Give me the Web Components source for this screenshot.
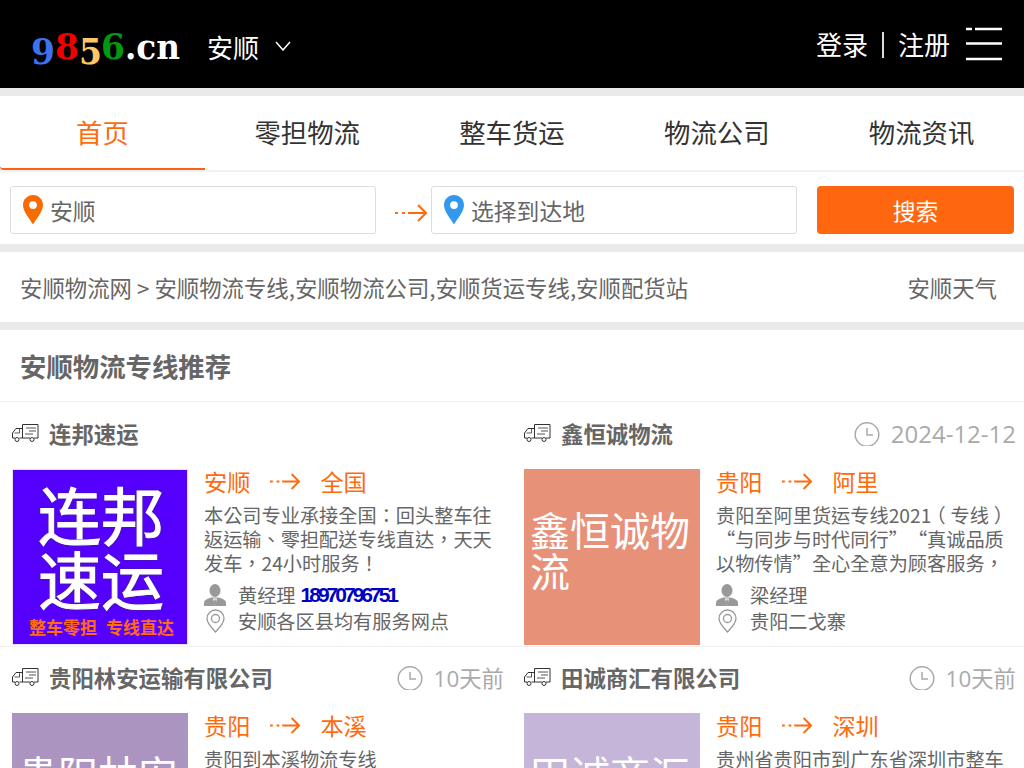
<!DOCTYPE html>
<html lang="zh-CN">
<head>
<meta charset="utf-8">
<title>安顺物流网</title>
<style>
    html { overflow: hidden; }
    body {
        margin: 0;
        background: #fff;
        color: #666;
        font-family: "Noto Sans CJK SC", "Noto Sans", sans-serif;
    }
</style>
</head>
<body>
<site-header></site-header>
<nav-tabs></nav-tabs>
<search-bar></search-bar>
<crumb-bar></crumb-bar>
<section-title>安顺物流专线推荐</section-title>
<line-grid>
    <line-card name="连邦速运" from="安顺" to="全国" contact="黄经理" phone="18970796751" address="安顺各区县均有服务网点"
        desc="本公司专业承接全国：回头整车往返运输、零担配送专线直达，天天发车，24小时服务！" special></line-card>
    <line-card name="鑫恒诚物流" date="2024-12-12" from="贵阳" to="阿里" contact="梁经理" address="贵阳二戈寨"
        cover="鑫恒诚物流" color="#e79179"
        desc="贵阳至阿里货运专线2021（专线）“与同步与时代同行”“真诚品质以物传情”全心全意为顾客服务，"></line-card>
    <line-card name="贵阳林安运输有限公司" date="10天前" from="贵阳" to="本溪" contact="陈经理" address="贵阳林安物流园"
        cover="贵阳林安运输" color="#ac94c0" desc="贵阳到本溪物流专线"></line-card>
    <line-card name="田诚商汇有限公司" date="10天前" from="贵阳" to="深圳" contact="田经理" address="贵阳市"
        cover="田诚商汇有限" color="#c5b5d9" desc="贵州省贵阳市到广东省深圳市整车运输"></line-card>
</line-grid>

<script>
const arrowIcon = (w, h) => `
    <svg width="${w}" height="${h}" viewBox="0 0 32 20" fill="none" stroke="#ff6a0d" stroke-width="2">
        <path d="M0 10h3M7 10h3M13 10h18M23 2l8 8-8 8"/>
    </svg>`;

const pinIcon = (color) => `
    <svg width="20" height="30" viewBox="0 0 20 30">
        <path fill="${color}" fill-rule="evenodd" d="M10 0C4.400 0 0 4.400 0 10c0 6.500 6.500 13.500 10 19.500C13.500 23.500 20 16.500 20 10 20 4.400 15.600 0 10 0zM10 6.200a3.900 3.900 0 1 1 0 7.800 3.900 3.900 0 0 1 0-7.800z"/>
    </svg>`;

class SiteHeader extends HTMLElement {
    constructor() {
        super();
        this.attachShadow({ mode: 'open' });
    }

    connectedCallback() {
        this.shadowRoot.innerHTML = `
            <style>
                :host {
                    display: flex;
                    align-items: center;
                    height: 88px;
                    background: #000;
                    color: #fff;
                    font-size: 26px;
                    border-bottom: 8px solid #eaeaea;
                }
                .logo { margin-left: 30px; display: block; }
                .city { margin-left: 7px; display: flex; align-items: center; gap: 16px; padding-top: 4px; }
                .user { margin-left: auto; display: flex; align-items: center; }
                .user span { margin-top: -2px; }
                .sep { width: 2px; height: 26px; background: #ddd; margin: 2px 14px 0 14px; }
                .menu { margin: 0 22px 0 16px; display: block; }
            </style>
            <svg class="logo" width="170" height="60" viewBox="0 0 170 60" font-family="'DejaVu Serif', serif" font-weight="bold" font-size="36">
                <text x="1" y="50" fill="#3f72ee" textLength="24" lengthAdjust="spacingAndGlyphs">9</text>
                <text x="25" y="45" fill="#f00000" textLength="24" lengthAdjust="spacingAndGlyphs">8</text>
                <text x="49" y="50" fill="#ffc766" textLength="23" lengthAdjust="spacingAndGlyphs">5</text>
                <text x="71" y="45" fill="#009a10" textLength="24" lengthAdjust="spacingAndGlyphs">6</text>
                <text x="95" y="45" fill="#fff" textLength="55" lengthAdjust="spacingAndGlyphs">.cn</text>
            </svg>
            <div class="city">
                <span>安顺</span>
                <svg width="16" height="10" viewBox="0 0 16 10" fill="none" stroke="#fff" stroke-width="1.500"><path d="M1 1l7 8 7-8"/></svg>
            </div>
            <div class="user">
                <span>登录</span><i class="sep"></i><span>注册</span>
                <svg class="menu" width="36" height="34" viewBox="0 0 36 34" fill="none" stroke="#fff" stroke-width="2.500">
                    <path d="M0 2h6M9 2h27M0 16.500h36M0 32h36"/>
                </svg>
            </div>
        `;
    }
}

class NavTabs extends HTMLElement {
    constructor() {
        super();
        this.attachShadow({ mode: 'open' });
    }

    connectedCallback() {
        const tabs = ['首页', '零担物流', '整车货运', '物流公司', '物流资讯'];
        this.shadowRoot.innerHTML = `
            <style>
                :host {
                    display: grid;
                    grid-template-columns: repeat(5, 1fr);
                    height: 76px;
                    box-sizing: border-box;
                    border-bottom: 2px solid #f0f0f5;
                    font-size: 26.400px;
                    color: #333;
                }
                a {
                    display: flex;
                    align-items: center;
                    justify-content: center;
                    height: 74px;
                    box-sizing: border-box;
                    padding-bottom: 4px;
                }
                a.on { color: #ff6a0d; border-bottom: 2px solid #ff6010; border-radius: 0 0 0 4px; padding-bottom: 2px; }
            </style>
            ${tabs.map((t, i) => `<a class="${i === 0 ? 'on' : ''}">${t}</a>`).join('')}
        `;
    }
}

class SearchBar extends HTMLElement {
    constructor() {
        super();
        this.attachShadow({ mode: 'open' });
    }

    connectedCallback() {
        this.shadowRoot.innerHTML = `
            <style>
                :host {
                    display: flex;
                    align-items: center;
                    height: 68px;
                    padding: 4px 10px 0;
                    border-bottom: 8px solid #eaeaea;
                    font-size: 22.800px;
                }
                .field {
                    width: 366px;
                    height: 48px;
                    box-sizing: border-box;
                    border: 1px solid #ddd;
                    border-radius: 3px;
                    display: flex;
                    align-items: center;
                    gap: 7px;
                    padding-left: 12px;
                    color: #666;
                }
                .go { width: 55px; padding: 6px 0 0 19px; box-sizing: border-box; display: flex; }
                button {
                    width: 197px;
                    height: 48px;
                    margin-left: 20px;
                    border: 0;
                    border-radius: 4px;
                    background: #ff6610;
                    color: #fff;
                    font: inherit;
                }
            </style>
            <div class="field">${pinIcon('#f76b00')}<span>安顺</span></div>
            <div class="go">${arrowIcon(32, 20)}</div>
            <div class="field">${pinIcon('#3399ee')}<span>选择到达地</span></div>
            <button>搜索</button>
        `;
    }
}

class CrumbBar extends HTMLElement {
    constructor() {
        super();
        this.attachShadow({ mode: 'open' });
    }

    connectedCallback() {
        this.shadowRoot.innerHTML = `
            <style>
                :host {
                    display: flex;
                    align-items: center;
                    justify-content: space-between;
                    height: 70px;
                    padding: 0 27px 0 20px;
                    border-bottom: 8px solid #eaeaea;
                    font-size: 22.400px;
                    color: #666;
                }
            </style>
            <span>安顺物流网 &gt; 安顺物流专线,安顺物流公司,安顺货运专线,安顺配货站</span>
            <span>安顺天气</span>
        `;
    }
}

class SectionTitle extends HTMLElement {
    constructor() {
        super();
        this.attachShadow({ mode: 'open' });
    }

    connectedCallback() {
        this.shadowRoot.innerHTML = `
            <style>
                :host {
                    display: flex;
                    align-items: center;
                    height: 71px;
                    padding-left: 20px;
                    border-bottom: 1px solid #eee;
                    font-size: 26.400px;
                    font-weight: bold;
                    color: #666;
                }
            </style>
            <slot></slot>
        `;
    }
}

class LineGrid extends HTMLElement {
    constructor() {
        super();
        this.attachShadow({ mode: 'open' });
    }

    connectedCallback() {
        this.shadowRoot.innerHTML = `
            <style>
                :host { display: grid; grid-template-columns: 1fr 1fr; padding-top: 1px; }
            </style>
            <slot></slot>
        `;
    }
}

// quotes and brackets fill a whole cell in the reference
const cellMarks = (text) => text
    .replace(/“/g, '<span class="cell open">“</span>')
    .replace(/”/g, '<span class="cell close">”</span>')
    .replace(/（/g, '<span class="cell lp">（</span>')
    .replace(/）/g, '<span class="cell rp">）</span>');

class LineCard extends HTMLElement {
    constructor() {
        super();
        this.attachShadow({ mode: 'open' });
    }

    cover() {
        if (this.hasAttribute('special')) {
            return `
                <div class="cover special">
                    <div class="big">连邦<br>速运</div>
                    <div class="small"><span>整车零担</span><span>专线直达</span></div>
                </div>`;
        }
        return `<div class="cover" style="background:${this.getAttribute('color')}"><div class="txt">${this.getAttribute('cover')}</div></div>`;
    }

    connectedCallback() {
        const attr = (n) => this.getAttribute(n) || '';
        const date = attr('date');
        const phone = attr('phone');
        this.shadowRoot.innerHTML = `
            <style>
                :host {
                    display: block;
                    height: 244px;
                    box-sizing: border-box;
                    padding: 0 8px 0 12px;
                    border-bottom: 1px solid #eee;
                    overflow: hidden;
                }
                .head { display: flex; align-items: center; height: 66px; box-sizing: border-box; padding-bottom: 5px; }
                .head .truck { margin-right: 10px; flex: none; }
                .head b { font-size: 22.400px; color: #666; margin-top: -1px; }
                .time {
                    margin-left: auto;
                    display: flex;
                    align-items: center;
                    gap: 11px;
                    font-size: 22.400px;
                    color: #aaa;
                    font-family: "Open Sans", "Noto Sans CJK SC", sans-serif;
                }
                .time.long { font-size: 24px; }
                .time svg { display: block; }
                .body { display: flex; gap: 16px; }
                .cover {
                    width: 176px;
                    height: 176px;
                    flex: none;
                    box-sizing: border-box;
                    color: #fff;
                    font-size: 40px;
                    line-height: 41px;
                    padding: 40px 6px 0;
                }
                .special {
                    background: #5500ff;
                    border: 1px solid #e4e0ee;
                    padding: 0;
                    text-align: center;
                }
                .special .big {
                    margin: 11px 0 0 2px;
                    font-size: 63px;
                    line-height: 64px;
                    -webkit-text-stroke: 1px #fff;
                    text-shadow: 0 0 3px #333;
                }
                .special .small {
                    display: flex;
                    justify-content: center;
                    gap: 9px;
                    margin: 6px 0 0 3px;
                    font-size: 17px;
                    line-height: 24px;
                    font-weight: bold;
                    color: #ff6a13;
                    white-space: nowrap;
                }
                .info { flex: 1; min-width: 0; }
                .route {
                    display: flex;
                    align-items: center;
                    height: 34px;
                    box-sizing: border-box;
                    padding-bottom: 10px;
                    font-size: 23.200px;
                    color: #ff6a0d;
                }
                .route svg { margin: 0 20px; flex: none; }
                .desc {
                    height: 72px;
                    font-family: "Noto Sans CJK TC", sans-serif;
                    font-size: 19.200px;
                    line-height: 24px;
                    color: #666;
                }
                .cell { display: inline-block; width: 1em; }
                .open { text-align: right; }
                .close { text-align: left; }
                .lp { margin: 0 .25em 0 -.25em; }
                .rp { margin: 0 -.25em 0 .25em; }
                .rows { margin-top: 7px; font-size: 19.200px; color: #666; }
                .row { display: flex; align-items: center; height: 26px; white-space: nowrap; }
                .row .ico { width: 34px; flex: none; display: flex; }
                .tel {
                    font: bold 21px "Liberation Sans", sans-serif;
                    letter-spacing: -3px;
                    color: #0000c4;
                    margin-left: 5px;
                }
            </style>
            <div class="head">
                <svg class="truck" width="27" height="19" viewBox="0 0 27 19" fill="none" stroke="#333" stroke-width="1">
                    <path d="M10.500 14V.5H26V14H22M18 14H7.500M10.500 4.500H4L.5 9V14H3"/>
                    <path d="M2.500 9H7.500V5" stroke-width=".8"/>
                    <path d="M14 4h10M17 7h7M13 10h8" stroke="#555"/>
                    <circle cx="5" cy="15.500" r="2"/>
                    <circle cx="20" cy="15.500" r="2"/>
                </svg>
                <b>${attr('name')}</b>
                ${date ? `<div class="time ${date.length > 6 ? 'long' : ''}">
                    <svg width="26" height="24" viewBox="0 0 26 24" fill="none" stroke="#aaa" stroke-width="1.500"><circle cx="13" cy="12.500" r="11.800"/><path d="M13 6v7h6"/></svg>
                    <span>${date}</span>
                </div>` : ''}
            </div>
            <div class="body">
                ${this.cover()}
                <div class="info">
                    <div class="route"><span>${attr('from')}</span>${arrowIcon(30, 19)}<span>${attr('to')}</span></div>
                    <div class="desc" lang="zh-TW">${cellMarks(attr('desc'))}</div>
                    <div class="rows">
                        <div class="row">
                            <span class="ico"><svg width="22" height="22" viewBox="0 0 22 22"><ellipse fill="#999" cx="11" cy="6.500" rx="5.500" ry="6.500"/><path fill="#999" d="M0 22v-3c0-3 3-4 7.500-5.500h7c4.500 1.500 7.500 2.500 7.500 5.500v3z"/><path fill="#fff" d="M9 14.500h4l-2 7z"/><path fill="#999" d="M10.300 15.500h1.400l.5 4-1.200 1.500-1.200-1.500z"/></svg></span>
                            <span>${attr('contact')}</span>${phone ? `<span class="tel">${phone}</span>` : ''}
                        </div>
                        <div class="row">
                            <span class="ico"><svg style="margin-left:2px" width="19" height="24" viewBox="0 0 19 24" fill="none" stroke="#999" stroke-width="1.300"><path d="M9.500 23C6 19 1 14.500 1 9.500a8.500 8.500 0 0 1 17 0C18 14.500 13 19 9.500 23z"/><circle cx="9.500" cy="9.500" r="4"/></svg></span>
                            <span>${attr('address')}</span>
                        </div>
                    </div>
                </div>
            </div>
        `;
    }
}

customElements.define('site-header', SiteHeader);
customElements.define('nav-tabs', NavTabs);
customElements.define('search-bar', SearchBar);
customElements.define('crumb-bar', CrumbBar);
customElements.define('section-title', SectionTitle);
customElements.define('line-grid', LineGrid);
customElements.define('line-card', LineCard);
</script>
</body>
</html>
